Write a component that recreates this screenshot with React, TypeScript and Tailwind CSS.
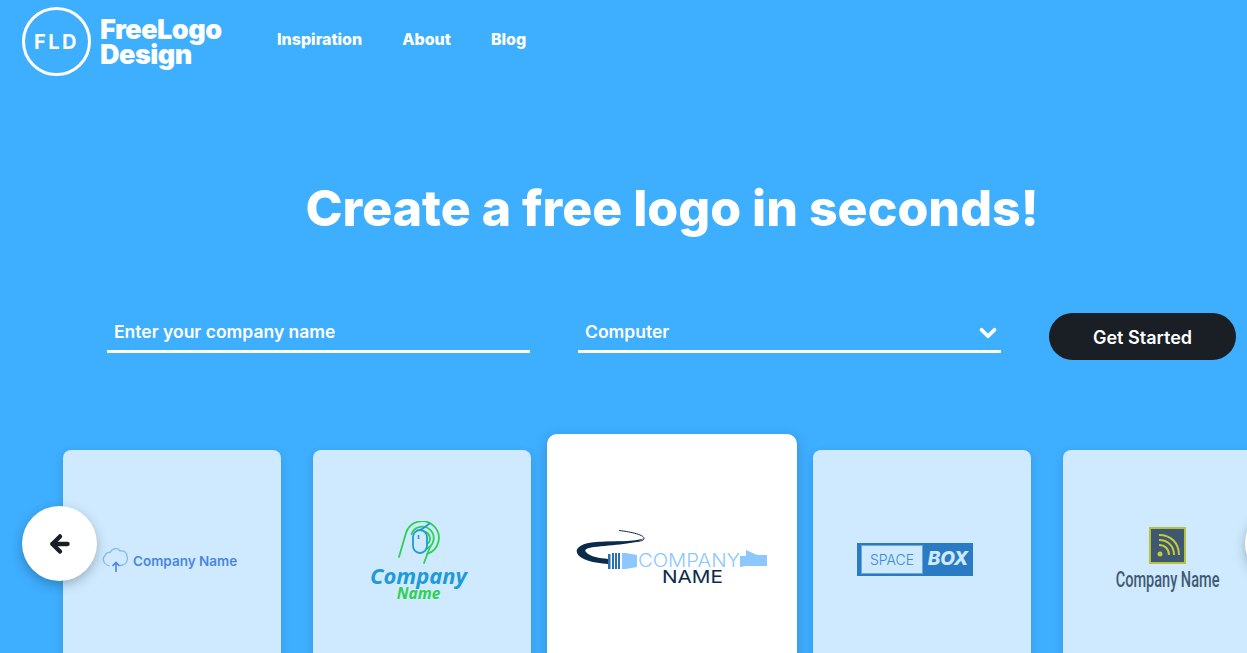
import React from 'react';
import { ArrowLeft, ChevronDown } from 'lucide-react';

const navigation = [
  { title: 'Inspiration', id: 1 },
  { title: 'About', id: 2 },
  { title: 'Blog', id: 3 },
];

const CloudLogo = () => (
  <div className="flex items-center gap-[5px] pt-[96px] pl-[39px]">
    <svg width="26" height="26" viewBox="0 0 26 26" fill="none" className="shrink-0">
      <path
        d="M8 20 L5 19 C1 17 0 12 3 9.500 C4 7 6 6 8 6.500 C10 2 16 1 18 5 C22 4 25 7 25 10.500 C26.500 14 24 18 21 19 L18 19.500"
        stroke="#8ab8ee"
        strokeWidth="1.300"
      />
      <path d="M14 26 V16.500 M10.500 20 L14 16.500 L17.500 20" stroke="#4a86e0" strokeWidth="1.600" />
    </svg>
    <span className="mt-[4px] font-['Inter',sans-serif] text-[13.500px] font-semibold text-[#4a86e0] whitespace-nowrap">
      Company Name
    </span>
  </div>
);

const MouseLogo = () => (
  <div className="flex flex-col items-center pt-[71px] pr-[7px]">
    <svg width="42" height="44" viewBox="0 0 42 44" fill="none">
      <g stroke="#2ed14f" strokeWidth="1.800" strokeLinecap="round">
        <path d="M1 36 L8 12 A16.800 16.800 0 1 1 29 33" />
        <path d="M13.500 13 A11.500 11.500 0 1 1 28 28" />
        <path d="M27 10.500 A7.500 7.500 0 0 1 30.500 22" />
        <path d="M32 26 L26 42" />
      </g>
      <rect x="15" y="9" width="14" height="23" rx="7" stroke="#1e9ad6" strokeWidth="1.800" />
      <path d="M22 9 L27 6 L32 2" stroke="#1e9ad6" strokeWidth="1.800" />
      <path d="M20.500 14 V18" stroke="#1e9ad6" strokeWidth="1.600" />
    </svg>
    <span className="-mt-[2px] font-['Noto_Sans',sans-serif] text-[22px] leading-[24px] font-bold italic text-[#1e9ad6] whitespace-nowrap">
      Company
    </span>
    <span className="-mt-[2px] font-['Noto_Sans',sans-serif] text-[15.500px] leading-[17px] font-bold italic text-[#2ed14f] whitespace-nowrap">
      Name
    </span>
  </div>
);

const CableLogo = () => (
  <div className="flex justify-center pt-[91px]">
    <svg width="200" height="62" viewBox="0 0 200 62" fill="none" className="mr-[4px]">
      <path d="M49 5.500 C62 7 75 10 74 14 C72 19 40 16 28 18" stroke="#0c2a4a" strokeWidth="1" />
      <path
        d="M74 13 C68 19 42 20 24 22 C16 23 14 25 16 27 C20 32 30 33 38 34 L38 39 C24 38 10 35 7 28 C5 22 13 18 26 17 C44 16 66 17 74 13 Z"
        fill="#0c2a4a"
      />
      <g fill="#2a6fb0">
        <rect x="38" y="29" width="2.500" height="15" />
        <rect x="42" y="28" width="2" height="16" />
        <rect x="45" y="28" width="2" height="16" />
        <rect x="48" y="28" width="2" height="16" />
      </g>
      <path d="M52 28 H56 L67 30 V42 L56 44 H52 Z" fill="#8cc8ff" />
      <text
        x="68"
        y="42"
        fontFamily="Inter, sans-serif"
        fontWeight="300"
        fontSize="18"
        fill="#8cc8ff"
        textLength="102"
        lengthAdjust="spacingAndGlyphs"
      >
        COMPANY
      </text>
      <path d="M170 31 H176 L176 25 L187 30 H197 V41 H176 L170 42 Z" fill="#8cc8ff" />
      <text
        x="92"
        y="58"
        fontFamily="Inter, sans-serif"
        fontWeight="400"
        fontSize="17"
        fill="#0c2a4a"
        textLength="61"
        lengthAdjust="spacingAndGlyphs"
      >
        NAME
      </text>
    </svg>
  </div>
);

const SpaceBoxLogo = () => (
  <div className="flex justify-center pt-[93px] pr-[14px]">
    <div className="flex h-[33px] w-[116px] items-center bg-[#2a7bc4] pl-[4px] py-[2px]">
      <div className="flex h-full w-[62px] items-center justify-center border border-[#6aa7dc] bg-[#cfeaff] font-['Inter',sans-serif] text-[14px] font-light text-[#3d8ad0]">
        SPACE
      </div>
      <div className="flex-1 text-center font-['Inter',sans-serif] text-[19px] font-extrabold italic text-[#cfeaff]">
        BOX
      </div>
    </div>
  </div>
);

const RssLogo = () => (
  <div className="flex flex-col items-center pt-[77px] pr-[9px]">
    <svg width="37" height="37" viewBox="0 0 37 37" fill="none">
      <rect x="1" y="1" width="35" height="35" fill="#3d5870" stroke="#b8c13c" strokeWidth="2" />
      <circle cx="11" cy="27" r="2.500" fill="#c5c93a" />
      <path d="M10 18 C16 18 20 22 20 28 M10 13 C19 13 25 19 25 28 M10 8 C22 8 30 16 30 28" stroke="#c5c93a" strokeWidth="2" />
    </svg>
    <span className="mt-[3px] scale-x-[0.66] font-['Roboto',sans-serif] text-[22px] leading-[26px] font-medium text-[#3f5a72] whitespace-nowrap">
      Company Name
    </span>
  </div>
);

const cards = [
  { id: 1, logo: <CloudLogo />, active: false },
  { id: 2, logo: <MouseLogo />, active: false },
  { id: 3, logo: <CableLogo />, active: true },
  { id: 4, logo: <SpaceBoxLogo />, active: false },
  { id: 5, logo: <RssLogo />, active: false },
];

const App = () => {
  return (
    <div className="relative h-[653px] overflow-hidden bg-[#3eaeff] font-['Inter',sans-serif] text-white">
      <header className="flex h-[83px] items-center pl-[22px]">
        <div className="flex w-[255px] items-center gap-[9px]">
          <div className="flex h-[69px] w-[69px] shrink-0 items-center justify-center rounded-full border-[3.500px] border-white text-[20px] font-bold tracking-[2.500px]">
            FLD
          </div>
          <div className="text-[27px] leading-[25px] font-black tracking-[-0.5px]">
            FreeLogo
            <br />
            Design
          </div>
        </div>
        <nav className="flex gap-[40px] pb-[5px] text-[16px] font-extrabold">
          {navigation.map(item => (
            <a key={item.id} href="#">
              {item.title}
            </a>
          ))}
        </nav>
      </header>

      <h1 className="mt-[91px] pl-[97px] text-center text-[50px] leading-[68px] font-extrabold">
        Create a free logo in seconds!
      </h1>

      <div className="mt-[71px] flex items-start pl-[107px]">
        <div className="flex h-[40px] w-[423px] items-center border-b-[3px] border-white pt-[2px] pl-[7px] text-[17.500px] font-semibold">
          Enter your company name
        </div>
        <div className="ml-[48px] flex h-[40px] w-[423px] items-center justify-between border-b-[3px] border-white pt-[2px] pl-[7px] text-[17.500px] font-semibold">
          Computer
          <ChevronDown size={26} strokeWidth={3.500} />
        </div>
        <button className="ml-[48px] h-[47px] w-[187px] rounded-[24px] bg-[#1a1f26] pt-[1px] text-[18px] font-semibold text-white">
          Get Started
        </button>
      </div>

      <div className="mt-[90px] flex items-start pl-[63px]">
        {cards.map((card, i) => (
          <div
            key={card.id}
            className={
              card.active
                ? 'mx-[16px] -mt-[16px] h-[300px] w-[250px] shrink-0 rounded-[10px] bg-white shadow-[0_4px_14px_rgba(0,0,0,0.18)]'
                : i === 0 || i === 3
                  ? 'mr-[32px] h-[300px] w-[218px] shrink-0 rounded-[8px] bg-[#cfeaff] shadow-[0_3px_10px_rgba(0,0,0,0.12)]'
                  : 'h-[300px] w-[218px] shrink-0 rounded-[8px] bg-[#cfeaff] shadow-[0_3px_10px_rgba(0,0,0,0.12)]'
            }
          >
            {card.logo}
          </div>
        ))}
      </div>

      <button className="absolute top-[506px] left-[22px] flex h-[75px] w-[75px] items-center justify-center rounded-full bg-white text-[#1a1f26] shadow-[0_4px_12px_rgba(0,0,0,0.25)]">
        <ArrowLeft size={26} strokeWidth={4} />
      </button>
      <button className="absolute top-[506px] left-[1245px] h-[75px] w-[75px] rounded-full bg-white shadow-[0_4px_12px_rgba(0,0,0,0.25)]" />
    </div>
  );
};

export default App;
